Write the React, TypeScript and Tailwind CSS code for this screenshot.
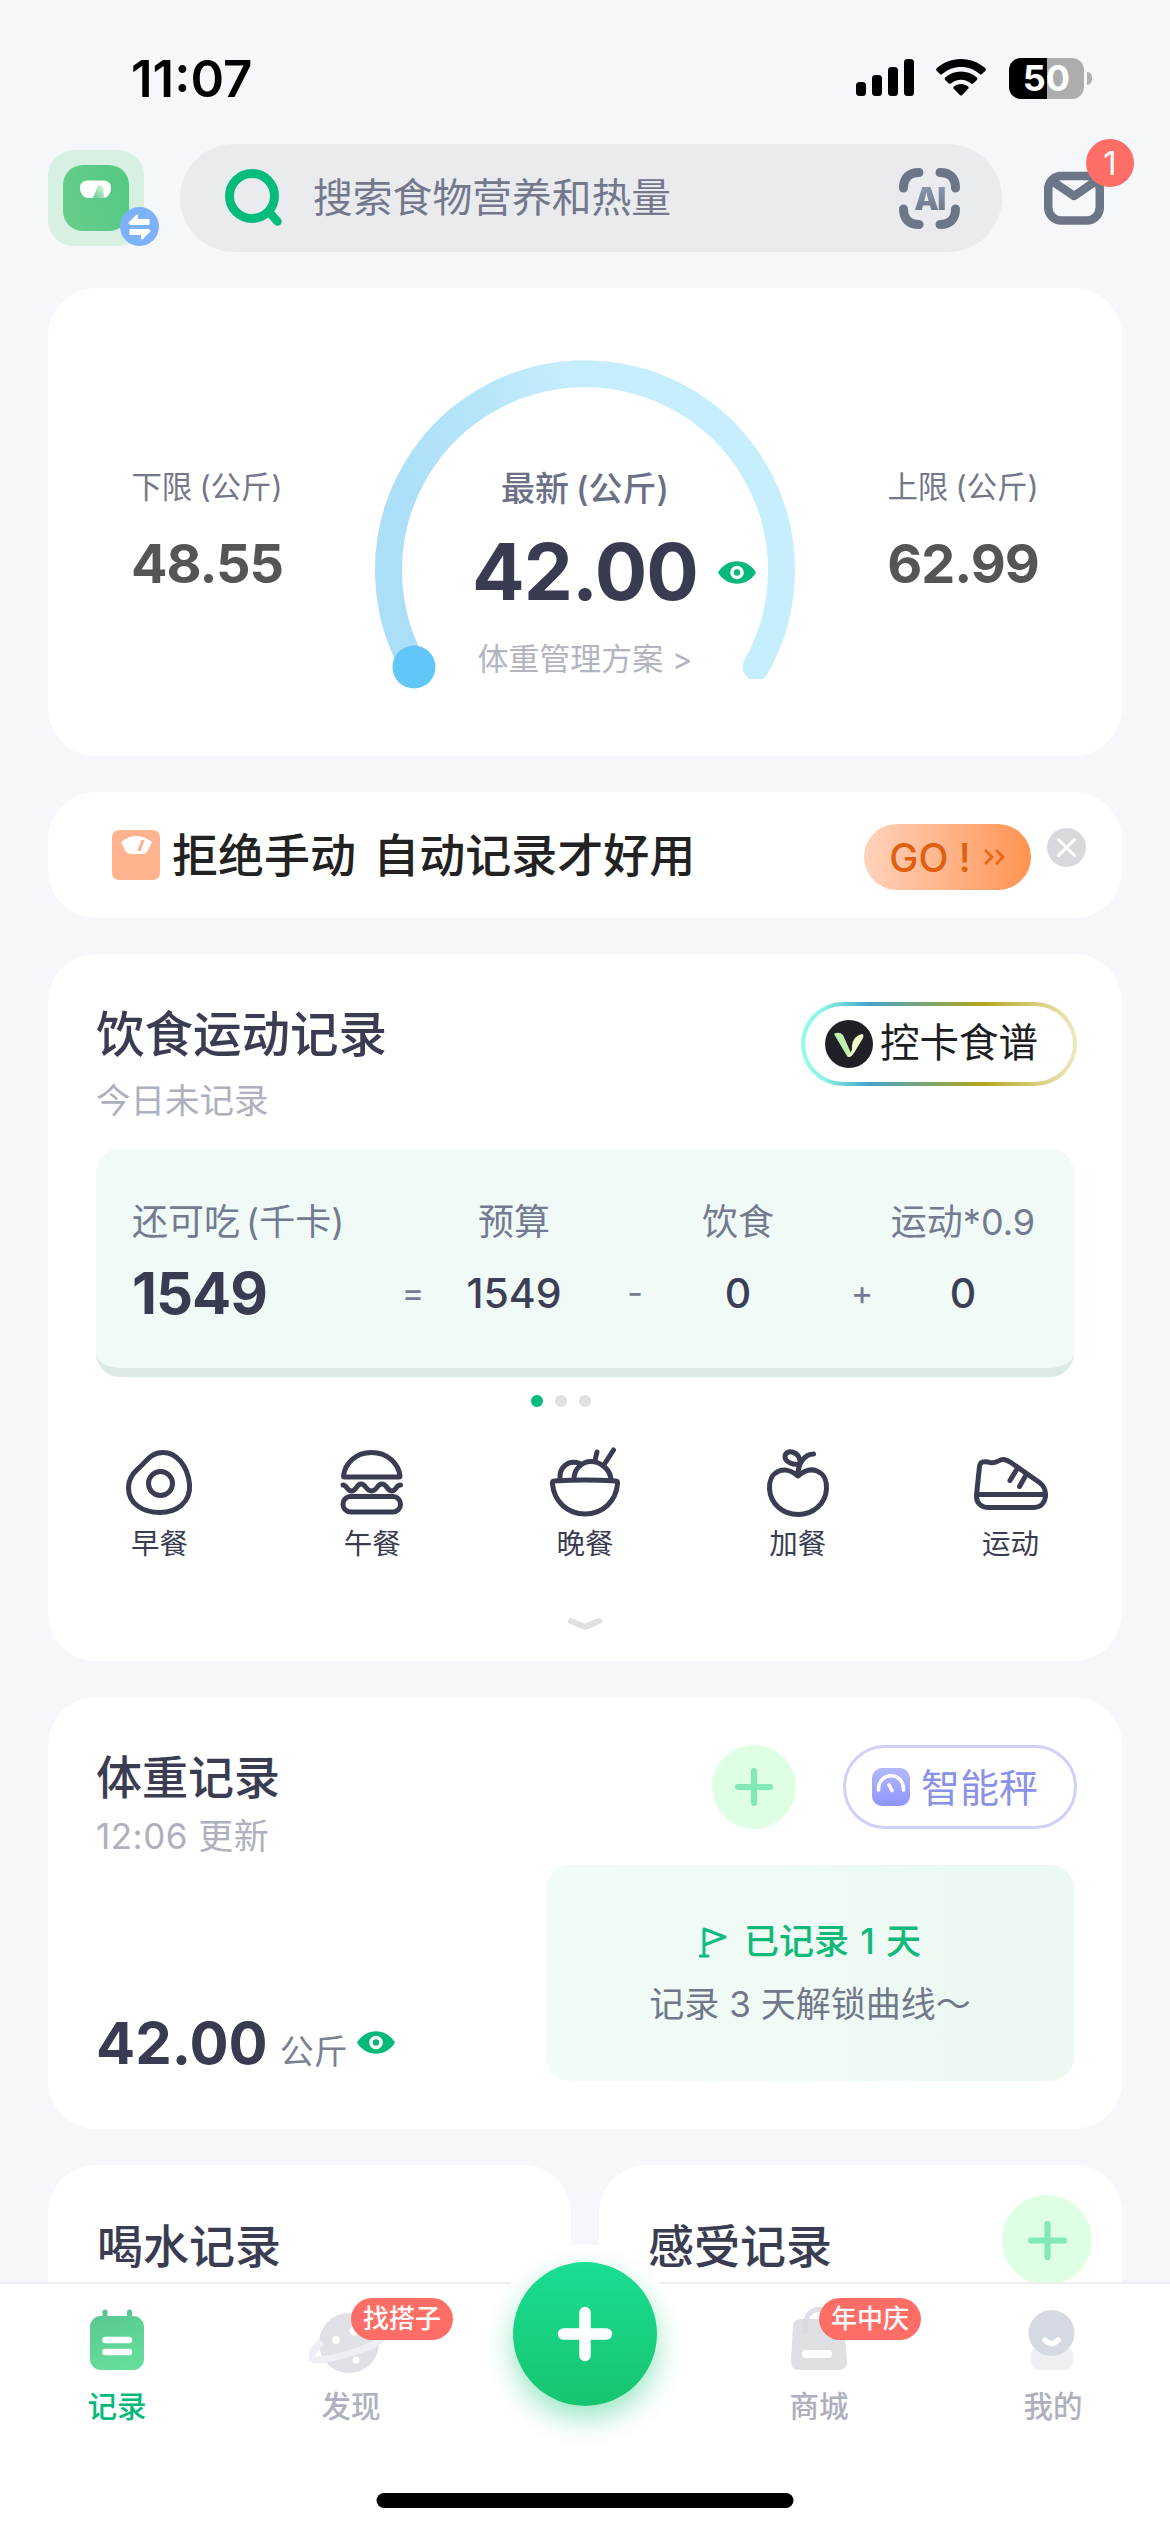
import type { ReactNode } from "react";
import clsx from "clsx";

const meals = [
  { Icon: EggIcon, label: "早餐" },
  { Icon: BurgerIcon, label: "午餐" },
  { Icon: BowlIcon, label: "晚餐" },
  { Icon: AppleIcon, label: "加餐" },
  { Icon: ShoeIcon, label: "运动" },
];

const tabs = [
  { Icon: RecordTabIcon, label: "记录", active: true },
  { Icon: PlanetTabIcon, label: "发现", badge: "找搭子" },
  null,
  { Icon: BagTabIcon, label: "商城", badge: "年中庆" },
  { Icon: MeTabIcon, label: "我的" },
];

/* ---------- icons ---------- */

const line = {
  fill: "none",
  stroke: "#3a3d52",
  strokeWidth: 5,
  strokeLinecap: "round" as const,
  strokeLinejoin: "round" as const,
};

function EggIcon() {
  return (
    <svg width="78" height="78" viewBox="0 0 78 78" {...line}>
      <path d="M43 9.500C56 9.500 67.500 22 69.500 41C71 60 56 69.500 40 69.500C22 69.500 8.500 60 8.500 45C8.500 34 15 28.500 21 23C27 17.500 31 9.500 43 9.500Z" />
      <circle cx="40.500" cy="40.500" r="12" />
    </svg>
  );
}

function BurgerIcon() {
  return (
    <svg width="78" height="78" viewBox="0 0 78 78" {...line}>
      <path d="M10.500 33C12 20 23 9.500 38.500 9.500C54 9.500 65.500 20 67 33Q67 34 66 34H11.500Q10.500 34 10.500 33Z" />
      <path d="M10 42C14 42 14 48 18.500 48C23.500 48 23.500 41 28 41C33 41 33 48 38.500 48C44 48 44 41 49 41C54 41 54 48 59 48C63 48 63 42 67.500 42" />
      <rect x="10" y="53.500" width="57.500" height="15.500" rx="7.500" />
    </svg>
  );
}

function BowlIcon() {
  return (
    <svg width="78" height="78" viewBox="0 0 78 78" {...line}>
      <path d="M8 38Q39 36 70 38Q72 38 71.500 41C70 58 57 71 39 71C21 71 8 58 6.500 41Q6 38 8 38Z" />
      <path d="M14 36C13 24 22 16.500 34 20.500M28 36C28 26 36 18.500 45 18.500C54 18.500 64 26 65 36" />
      <path d="M49 17.500L51 9M58.500 21L67.500 7" />
    </svg>
  );
}

function AppleIcon() {
  return (
    <svg width="78" height="78" viewBox="0 0 78 78" {...line}>
      <path d="M39 33C32 27 26 25.500 20 28C12.500 31 10 39 10.500 46C11.500 61 24 71.500 39 71.500C54 71.500 66.500 61 67.500 46C68 39 65.500 31 58 28C52 25.500 46 27 39 33Z" />
      <path d="M39 31C39 20 46 11 54.500 11M41.500 20.500C35 23 25.500 19 26 13C27 6 41 7.500 41.500 20.500Z" />
    </svg>
  );
}

function ShoeIcon() {
  return (
    <svg width="78" height="78" viewBox="0 0 78 78" {...line}>
      <path d="M4.500 52L7.500 23.500C8 19 11 18 16 19C24.500 22 26 16 32 16.500C36 17 38 19 41 21L67.500 39.500C76.500 46 76 64 62 64.500H17C9 64.500 4 60 4.500 52ZM5.500 51.500H73" />
      <path d="M45 26L38 37.500M54 32L47.500 43.500" />
    </svg>
  );
}

function Eye({ className }: { className?: string }) {
  return (
    <svg width="38" height="23" viewBox="0 0 38 23" className={className}>
      <path d="M0 11.500C9-3.500 29-3.500 38 11.500C29 26.500 9 26.500 0 11.500Z" fill="#05b978" />
      <circle cx="19" cy="11.500" r="5" fill="none" stroke="#fff" strokeWidth="3.600" />
    </svg>
  );
}

function PlusIcon({ size }: { size: number }) {
  return (
    <svg width={size} height={size} viewBox="0 0 38 38" stroke="#80e9b4" strokeWidth="6" strokeLinecap="round">
      <path d="M19 3V35M3 19H35" />
    </svg>
  );
}

function RecordTabIcon() {
  return (
    <svg width="66" height="66" viewBox="0 0 66 66">
      <defs>
        <linearGradient id="rec" x1="0" y1="0" x2="0.300" y2="1">
          <stop stopColor="#58c890" />
          <stop offset="1" stopColor="#65dd9c" />
        </linearGradient>
      </defs>
      <path d="M21 5V12M45.500 5V12" stroke="#58c48e" strokeWidth="5" strokeLinecap="round" />
      <rect x="6" y="9" width="54" height="54" rx="11" fill="url(#rec)" />
      <path d="M21.500 33H45M21.500 45H45" stroke="#fff" strokeWidth="6.500" strokeLinecap="round" />
    </svg>
  );
}

function PlanetTabIcon() {
  return (
    <svg width="84" height="66" viewBox="0 0 84 66">
      <circle cx="40" cy="36" r="30" fill="#e0e1e6" />
      <circle cx="27" cy="33" r="4" fill="#fff" />
      <circle cx="45" cy="24" r="4.500" fill="#fff" />
      <circle cx="47" cy="53" r="3.500" fill="#fff" />
      <path d="M11 37C-2 48 0 56 17 52C42 48 76 36 80 23" fill="none" stroke="#eeeff4" strokeWidth="7" strokeLinecap="round" />
    </svg>
  );
}

function BagTabIcon() {
  return (
    <svg width="66" height="66" viewBox="0 0 66 66">
      <path d="M15 12H51Q57 12 58 18L61 53Q62 63 52 63H14Q4 63 5 53L7 18Q8 12 15 12Z" fill="#dfe0e4" />
      <path d="M19.500 25V18C19.500-3 46.500-3 46.500 18V25" fill="none" stroke="#d6d8e2" strokeWidth="5" strokeLinecap="round" opacity="0.800" />
      <path d="M20 47H42" stroke="#fff" strokeWidth="8" strokeLinecap="round" />
    </svg>
  );
}

function MeTabIcon() {
  return (
    <svg width="66" height="66" viewBox="0 0 66 66">
      <rect x="11" y="40" width="42" height="23" rx="8" fill="#eeeff3" />
      <circle cx="31.500" cy="26" r="23" fill="#d5d9e1" />
      <path d="M25 33Q31.500 40 38 33" fill="none" stroke="#fff" strokeWidth="5.500" strokeLinecap="round" />
    </svg>
  );
}

/* ---------- pieces ---------- */

function Card({ className, children }: { className?: string; children: ReactNode }) {
  return <section className={clsx("rounded-[48px] bg-white", className)}>{children}</section>;
}

function StatusBar() {
  return (
    <div className="flex h-[144px] items-center justify-between pt-[12px] pr-[78px] pl-[131px]">
      <span className="text-[51px] leading-none font-semibold text-black">11:07</span>
      <div className="flex items-center">
        <svg width="58" height="38" viewBox="0 0 58 38">
          <rect x="0" y="23" width="10" height="14" rx="3.500" />
          <rect x="16" y="16" width="10" height="21" rx="3.500" />
          <rect x="32" y="8" width="10" height="29" rx="3.500" />
          <rect x="48" y="0" width="10" height="37" rx="3.500" />
        </svg>
        <svg width="50" height="38" viewBox="0 0 50 38" className="ml-[22px]">
          <path d="M25 0C34.500 0 43 3.500 49.300 9.300C50 10 50 11 49.400 11.700L46 15C45.300 15.700 44.500 15.700 43.800 15C38.500 10.500 32 8 25 8C18 8 11.500 10.500 6.200 15C5.500 15.700 4.700 15.700 4 15L0.600 11.700C0 11 0 10 0.700 9.300C7 3.500 15.500 0 25 0Z" />
          <path d="M25 12.500C31 12.500 36.500 14.700 40.800 18.500C41.500 19.200 41.500 20.200 40.800 20.900L37.300 24.400C36.700 25 35.800 25 35.100 24.500C32.300 22.200 28.800 20.800 25 20.800C21.200 20.800 17.700 22.200 14.900 24.500C14.200 25 13.300 25 12.700 24.400L9.200 20.900C8.500 20.200 8.500 19.200 9.200 18.500C13.500 14.700 19 12.500 25 12.500Z" />
          <path d="M25 25C27.700 25 30.200 26 32.100 27.600C32.800 28.200 32.800 29.100 32.200 29.800L26.200 36C25.500 36.700 24.500 36.700 23.800 36L17.800 29.800C17.200 29.100 17.200 28.200 17.900 27.600C19.800 26 22.300 25 25 25Z" />
        </svg>
        <div className="ml-[23px] flex h-[41px] w-[75px] items-center justify-center rounded-[12px] bg-linear-to-r from-black from-51% to-[#adadaf] to-51% text-[36px] leading-none font-bold text-white">
          50
        </div>
        <span className="ml-[3px] h-[13px] w-[5px] rounded-r-full bg-[#b0b0b2]" />
      </div>
    </div>
  );
}

function Header() {
  return (
    <header className="flex h-[108px] items-center px-12">
      <div className="relative flex h-24 w-24 items-center justify-center rounded-[26px] bg-[#d7f0e2]">
        <svg width="66" height="66" viewBox="0 0 66 66">
          <defs>
            <linearGradient id="avatar" x1="0" y1="0.700" x2="1" y2="0.300">
              <stop stopColor="#68cc8a" />
              <stop offset="1" stopColor="#54c984" />
            </linearGradient>
            <linearGradient id="needle" x1="0" y1="1" x2="1" y2="0">
              <stop stopColor="#5ccb86" />
              <stop offset="1" stopColor="#e6f8ec" />
            </linearGradient>
          </defs>
          <rect width="66" height="66" rx="20" fill="url(#avatar)" />
          <path d="M24 15.500H41Q48 16 48 23C48 29 44 33 40 33H25C21 33 17 29 17 23Q17 16 24 15.500Z" fill="#fff" />
          <path d="M30 33L34.500 22Q37.500 17.500 40.500 23L41 33Z" fill="url(#needle)" />
        </svg>
        <div className="absolute -right-[15px] bottom-0 flex h-[39px] w-[39px] items-center justify-center rounded-full bg-[#7db1fb]">
          <svg width="23" height="26" viewBox="0 0 23 26" fill="#fff" stroke="#fff" strokeWidth="2" strokeLinejoin="round">
            <path d="M1.500 9L9 1.500V6H20.500V10H2.500ZM21.500 17L14 24.500V20H2.500V16H20.500Z" />
          </svg>
        </div>
      </div>

      <div className="ml-9 flex h-[108px] w-[822px] items-center rounded-full bg-[#e9ebef] pr-[42px] pl-[45px]">
        <svg width="58" height="58" viewBox="0 0 58 58" fill="none" stroke="#05bc7c" strokeLinecap="round">
          <circle cx="27" cy="27" r="22.500" strokeWidth="9" />
          <path d="M45 44L52.500 52.500" strokeWidth="8.500" />
        </svg>
        <span className="ml-[30px] text-[39.8px] leading-none text-[#73788b]">搜索食物营养和热量</span>
        <div className="relative ml-auto flex h-[61px] w-[61px] items-center justify-center">
          <svg width="61" height="61" viewBox="0 0 61 61" fill="none" stroke="#6c7688" strokeWidth="9" strokeLinecap="round" className="absolute inset-0">
            <path d="M4.500 20C4.500 10 10 4.500 20 4.500M41 4.500C51 4.500 56.500 10 56.500 20M56.500 41C56.500 51 51 56.500 41 56.500M20 56.500C10 56.500 4.500 51 4.500 41" />
          </svg>
          <span className="bg-linear-to-b from-[#8d9ab2] to-[#6c7688] bg-clip-text text-[31px] leading-none font-black tracking-[-1.5px] text-transparent">
            AI
          </span>
        </div>
      </div>

      <div className="relative ml-[42px]">
        <svg width="60" height="54" viewBox="0 0 60 54" fill="none" stroke="#6c7688" strokeWidth="8.500" strokeLinejoin="round">
          <rect x="4.250" y="5" width="51.500" height="44.500" rx="13" />
          <path d="M8 10L30 25L52 10" />
        </svg>
        <span className="absolute -top-[32px] left-[42px] flex h-12 w-12 items-center justify-center rounded-full bg-[#ff6e66] text-[33px] leading-none text-white">
          1
        </span>
      </div>
    </header>
  );
}

function Limit({ label, value }: { label: string; value: string }) {
  return (
    <div className="flex w-[152px] flex-col items-center pt-[184px] whitespace-nowrap">
      <span className="text-[30.5px] leading-none text-[#737889]">
        {label}
        <span className="ml-[7px]">(公斤)</span>
      </span>
      <span className="mt-[34px] text-[54px] leading-none font-bold tracking-[-1px] text-[#555]">{value}</span>
    </div>
  );
}

function WeightGauge() {
  return (
    <Card className="mt-9 flex h-[468px] justify-between px-[83px]">
      <Limit label="下限" value="48.55" />
      <div className="relative h-full w-[430px]">
        <svg width="430" height="468" viewBox="0 0 430 468" className="absolute inset-0" fill="none">
          <defs>
            <linearGradient id="arc" x1="0" y1="0.500" x2="1" y2="0.300">
              <stop stopColor="#abdff8" />
              <stop offset="0.300" stopColor="#b6e5f9" />
              <stop offset="0.550" stopColor="#c6edfc" />
              <stop offset="1" stopColor="#c6eefc" />
            </linearGradient>
            <clipPath id="arcClip">
              <rect width="430" height="391" />
            </clipPath>
          </defs>
          <path
            d="M44 379A196.500 196.500 0 1 1 386 379"
            stroke="url(#arc)"
            strokeWidth="27"
            strokeLinecap="round"
            clipPath="url(#arcClip)"
          />
          <circle cx="44" cy="379" r="21.500" fill="#60c7f8" />
        </svg>
        <div className="relative flex flex-col items-center pt-[184px]">
          <span className="text-[34px] leading-none font-medium text-[#6a7085]">
            最新<span className="ml-[7px]">(公斤)</span>
          </span>
          <div className="relative mt-[27px] h-[78px] leading-none">
            <span className="text-[78px] leading-none font-bold tracking-[-1px] text-[#393c51]">42.00</span>
            <Eye className="absolute top-[28px] left-[246px]" />
          </div>
          <span className="mt-[32px] text-[31px] leading-none text-[#b2b4c0]">体重管理方案 &gt;</span>
        </div>
      </div>
      <Limit label="上限" value="62.99" />
    </Card>
  );
}

function Banner() {
  return (
    <Card className="mt-9 flex h-[126px] items-center pr-9 pl-16">
      <svg width="48" height="50" viewBox="0 0 48 50">
        <rect width="48" height="50" rx="7" fill="#ffb38f" />
        <path d="M9 12Q24 0 40 12L35 22Q33 24 30 24H19Q16 24 14 22Z" fill="#fff" />
        <path d="M27 21L31 10" stroke="#ffb38f" strokeWidth="3" />
      </svg>
      <span className="ml-3 text-[46px] leading-none font-medium [word-spacing:5px] text-[#222]">拒绝手动 自动记录才好用</span>
      <button className="mt-1 ml-auto flex h-[66px] w-[167px] items-center justify-center rounded-full bg-linear-to-r from-[#ffd2ba] to-[#ff9350] text-[39px] leading-none font-medium text-[#e0600f]">
        <span>GO !</span>
        <svg width="23" height="18" viewBox="0 0 23 18" fill="none" stroke="#e8681a" strokeWidth="2.800" className="ml-3">
          <path d="M2 2L9 9L2 16M13 2L20 9L13 16" />
        </svg>
      </button>
      <svg width="39" height="39" viewBox="0 0 39 39" className="mb-[15px] ml-4">
        <circle cx="19.500" cy="19.500" r="19.500" fill="#d8d9dc" />
        <path d="M11.500 11.500L27.500 27.500M27.500 11.500L11.500 27.500" stroke="#fff" strokeWidth="3" strokeLinecap="round" />
      </svg>
    </Card>
  );
}

function Operand({ label, value, className }: { label: string; value: string; className?: string }) {
  return (
    <div className={clsx("flex flex-col items-center whitespace-nowrap", className)}>
      <span className="text-[36px] leading-none text-[#737b90]">{label}</span>
      <span className="mt-8 flex h-[42px] items-center text-[41px] leading-none font-medium text-[#3b3f55]">{value}</span>
    </div>
  );
}

function Operator({ sign }: { sign: string }) {
  return <span className="mt-[68px] flex h-[42px] w-5 items-center justify-center text-[34px] leading-none text-[#737b90]">{sign}</span>;
}

function DietCard() {
  return (
    <Card className="mt-9 h-[707px] px-12 pt-12">
      <div className="flex items-start justify-between">
        <div className="pt-[9px]">
          <h2 className="text-[48.5px] leading-none font-medium text-[#3a3d52]">饮食运动记录</h2>
          <p className="mt-[24px] text-[34.5px] leading-none text-[#aeb0bd]">今日未记录</p>
        </div>
        <button className="-mr-[3px] rounded-full bg-[linear-gradient(90deg,#93fbe9_0%,#8cf5e6_8%,#45a5c9_24%,#b3a61c_66%,#d8cf7c_86%,#ece9c0_100%)] p-1">
          <span className="flex h-[76px] w-[268px] items-center rounded-full bg-white pl-5">
            <svg width="48" height="48" viewBox="0 0 48 48">
              <circle cx="24" cy="24" r="24" fill="#202127" />
              <path d="M9 14Q14 11 18 15L26 33Q26 38 22 36Z" fill="#bff0ac" />
              <path d="M27 26Q28 16 37 14Q39 14 38 18L29 33Q25 39 22 36Q28 32 27 26Z" fill="#effbc9" />
            </svg>
            <span className="ml-[7px] text-[39.5px] leading-none whitespace-nowrap text-[#1d1e22]">控卡食谱</span>
          </span>
        </button>
      </div>

      <div className="mt-[31px] flex h-[228px] rounded-3xl border-b-[9px] border-[#dbeae4] bg-[#f0faf7] px-9 pt-[55px]">
        <div className="w-[206px]">
          <div className="text-[36px] leading-none whitespace-nowrap text-[#737b90]">
            还可吃<span className="ml-1.5">(千卡)</span>
          </div>
          <div className="mt-8 flex h-[42px] items-center text-[58px] leading-none font-bold tracking-[-1px] text-[#393c51]">1549</div>
        </div>
        <div className="ml-[65px] flex">
          <Operator sign="=" />
          <Operand label="预算" value="1549" className="ml-[42px] w-[98px]" />
          <div className="ml-[62px]">
            <Operator sign="-" />
          </div>
          <Operand label="饮食" value="0" className="ml-14 w-[74px]" />
          <div className="ml-[77px]">
            <Operator sign="+" />
          </div>
          <Operand label="运动*0.9" value="0" className="ml-[19px] w-[144px]" />
        </div>
      </div>

      <div className="mt-[18px] flex justify-center gap-3 pr-12">
        <i className="h-3 w-3 rounded-full bg-[#05bc7c]" />
        <i className="h-3 w-3 rounded-full bg-[#dfe0e1]" />
        <i className="h-3 w-3 rounded-full bg-[#dfe0e1]" />
      </div>

      <div className="-mx-[43px] mt-9 flex">
        {meals.map(({ Icon, label }) => (
          <div key={label} className="flex flex-1 flex-col items-center">
            <Icon />
            <span className="mt-[9px] text-[28.5px] leading-none text-[#3a3d52]">{label}</span>
          </div>
        ))}
      </div>

      <svg width="36" height="16" viewBox="0 0 36 16" fill="none" stroke="#dfe0e2" strokeWidth="6" strokeLinecap="round" className="mx-auto mt-[58px]">
        <path d="M4 4L18 10L32 4" />
      </svg>
    </Card>
  );
}

function WeightCard() {
  return (
    <Card className="mt-9 flex h-[432px] justify-between px-12 pt-12">
      <div className="pt-[9px]">
        <h2 className="text-[46px] leading-none font-medium text-[#3a3d52]">体重记录</h2>
        <p className="mt-[19px] text-[35px] leading-none tracking-[0.5px] text-[#aeb0bd]">12:06 更新</p>
        <div className="mt-[160px] flex items-end">
          <span className="text-[58px] leading-none font-bold text-[#393c51]">42.00</span>
          <span className="mb-[3px] ml-3 text-[34px] leading-none text-[#7b8093]">公斤</span>
          <Eye className="mb-[18px] ml-[9px]" />
        </div>
      </div>

      <div className="flex flex-col items-end">
        <div className="-mr-[3px] flex gap-[47px]">
          <button className="flex h-[84px] w-[84px] items-center justify-center rounded-full bg-[#dfffe5]">
            <PlusIcon size={38} />
          </button>
          <button className="flex h-[84px] w-[234px] items-center rounded-full border-[3px] border-[#cfd1fa] pl-[26px]">
            <svg width="38" height="38" viewBox="0 0 38 38">
              <defs>
                <linearGradient id="scale" x1="0" y1="0" x2="0" y2="1">
                  <stop stopColor="#b3b9ff" />
                  <stop offset="1" stopColor="#8f95fb" />
                </linearGradient>
              </defs>
              <rect width="38" height="38" rx="10" fill="url(#scale)" />
              <path d="M6.500 22C6 3 32 3 31.500 22M17 17L20 22.500" fill="none" stroke="#fff" strokeWidth="3.600" strokeLinecap="round" />
            </svg>
            <span className="ml-[11px] text-[39px] leading-none text-[#8b90e9]">智能秤</span>
          </button>
        </div>
        <div className="mt-9 flex h-[216px] w-[528px] flex-col items-center rounded-3xl bg-linear-to-r from-[#f2fcf7] to-[#ebf9f1] pt-[59px]">
          <div className="flex items-center text-[35px] leading-none font-medium [word-spacing:2px] text-[#0fb97a]">
            <svg width="28" height="32" viewBox="0 0 28 32" fill="none" stroke="#0fbc7d" strokeWidth="3" className="mr-[17px]">
              <path d="M5 30V3L26 11L5 19M1 30H9" strokeLinejoin="round" strokeLinecap="round" />
            </svg>
            已记录 1 天
          </div>
          <div className="mt-[28px] text-[35px] leading-none whitespace-nowrap text-[#71788a]">记录 3 天解锁曲线～</div>
        </div>
      </div>
    </Card>
  );
}

function TabBar() {
  return (
    <nav className="absolute inset-x-0 bottom-0 h-[250px]">
      <div className="absolute inset-0 border-t-2 border-[#edeff1] bg-white" />
      {/* white bump behind the add button */}
      <div className="absolute -top-[38px] left-1/2 h-[180px] w-[180px] -translate-x-1/2 rounded-full bg-white" />
      <div className="relative flex pt-[25px]">
        {tabs.map((tab) =>
          tab ? (
            <div key={tab.label} className="relative flex flex-1 flex-col items-center">
              <tab.Icon />
              <span
                className={clsx(
                  "mt-[19px] text-[29.5px] leading-none font-medium",
                  tab.active ? "text-[#05b978]" : "text-[#aeb0bd]"
                )}
              >
                {tab.label}
              </span>
              {tab.badge && (
                <span className="absolute -top-[9px] left-1/2 flex h-[42px] items-center rounded-full bg-[#ff6e66] px-3 text-[26px] leading-none font-medium whitespace-nowrap text-white">
                  {tab.badge}
                </span>
              )}
            </div>
          ) : (
            <div key="add" className="relative flex-1">
              <button className="absolute -top-[45px] left-[45px] flex h-36 w-36 items-center justify-center rounded-full bg-linear-to-b from-[#1ade92] to-[#17c470] shadow-[0_12px_28px_rgba(26,200,120,0.45)]">
                <svg width="58" height="58" viewBox="0 0 58 58" stroke="#fff" strokeWidth="11.500" strokeLinecap="round">
                  <path d="M29 7.500V50.500M7.500 29H50.500" />
                </svg>
              </button>
            </div>
          )
        )}
      </div>
      <div className="absolute bottom-6 left-1/2 h-[15px] w-[417px] -translate-x-1/2 rounded-full bg-black" />
    </nav>
  );
}

export default function App() {
  return (
    <main
      lang="zh-CN"
      className="relative h-[2532px] w-[1170px] overflow-hidden bg-[#f5f7fb] font-['Inter','Noto_Sans_CJK_SC',sans-serif]"
    >
      <StatusBar />
      <Header />
      <div className="px-12">
        <WeightGauge />
        <Banner />
        <DietCard />
        <WeightCard />
        <div className="mt-9 flex justify-between">
          <Card className="h-[320px] w-[523px] px-[49px] pt-[58px]">
            <h2 className="text-[46px] leading-none font-medium text-[#3a3d52]">喝水记录</h2>
          </Card>
          <Card className="flex h-[320px] w-[523px] items-start justify-between pt-[30px] pr-[30px] pl-[49px]">
            <h2 className="mt-7 text-[46px] leading-none font-medium text-[#3a3d52]">感受记录</h2>
            <div className="flex h-[90px] w-[90px] items-center justify-center rounded-full bg-[#dfffe5]">
              <PlusIcon size={39} />
            </div>
          </Card>
        </div>
      </div>
      <TabBar />
    </main>
  );
}
